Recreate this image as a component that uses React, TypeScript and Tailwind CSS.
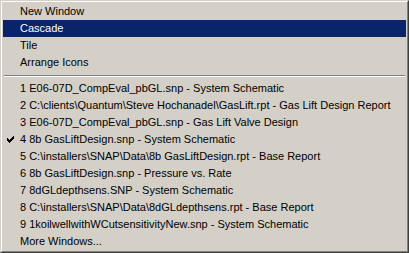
const top = ["New Window", "Cascade", "Tile", "Arrange Icons"];

const windows = [
  "1 E06-07D_CompEval_pbGL.snp - System Schematic",
  "2 C:\\clients\\Quantum\\Steve Hochanadel\\GasLift.rpt - Gas Lift Design Report",
  "3 E06-07D_CompEval_pbGL.snp - Gas Lift Valve Design",
  "4 8b GasLiftDesign.snp - System Schematic",
  "5 C:\\installers\\SNAP\\Data\\8b GasLiftDesign.rpt - Base Report",
  "6 8b GasLiftDesign.snp - Pressure vs. Rate",
  "7 8dGLdepthsens.SNP - System Schematic",
  "8 C:\\installers\\SNAP\\Data\\8dGLdepthsens.rpt - Base Report",
  "9 1koilwellwithWCutsensitivityNew.snp - System Schematic",
  "More Windows...",
];

function Check() {
  // classic 7x7 menu tick
  const rows = ["......X", ".....XX", "X...XXX", "XX.XXX.", "XXXXX..", ".XXX...", "..X...."];
  return (
    <svg width="7" height="7" viewBox="0 0 7 7" shapeRendering="crispEdges">
      {rows.flatMap((r, y) =>
        r.split("").map((c, x) => (c === "X" ? <rect key={`${x}-${y}`} x={x} y={y} width="1" height="1" fill="#000" /> : null))
      )}
    </svg>
  );
}

function Item({ label, active, checked }: { label: string; active?: boolean; checked?: boolean }) {
  return (
    <div className={`relative flex h-[17px] items-center pl-[17px] whitespace-nowrap ${active ? "bg-[#0a246a] text-white" : "text-black"}`}>
      {checked && (
        <span className="absolute left-[4px] top-[5px] flex">
          <Check />
        </span>
      )}
      {label}
    </div>
  );
}

export default function App() {
  return (
    <div className="w-[409px] h-[253px] bg-[#d4d0c8] border-t border-l border-t-[#d4d0c8] border-l-[#d4d0c8] border-r border-b border-r-[#404040] border-b-[#404040] text-[11px] overflow-hidden" style={{ fontFamily: '"Liberation Sans", Arial, sans-serif' }}>
      <div className="h-full border-t border-l border-t-white border-l-white border-r border-b border-r-[#808080] border-b-[#808080] p-px">
        {top.map((t) => (
          <Item key={t} label={t} active={t === "Cascade"} />
        ))}
        <div className="h-[9px] flex flex-col justify-center px-px">
          <div className="h-px bg-[#808080]" />
          <div className="h-px bg-white" />
        </div>
        {windows.map((w, i) => (
          <Item key={w} label={w} checked={i === 3} />
        ))}
      </div>
    </div>
  );
}
